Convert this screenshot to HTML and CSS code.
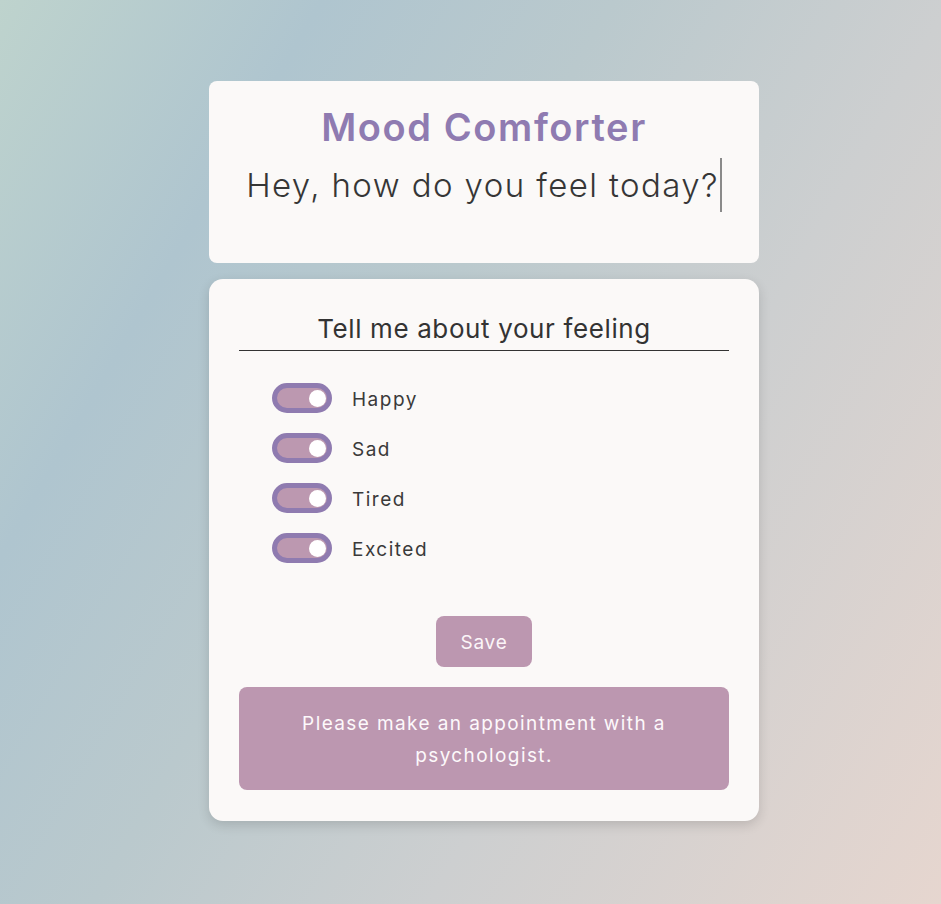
FILE: index.html
```html
<!DOCTYPE html>
<html lang="en">
<head>
<meta charset="utf-8">
<title>Mood Comforter</title>
<link rel="stylesheet" href="styles.css">
</head>
<body>
<main class="app">
  <section class="card card-top">
    <h1 class="title">Mood Comforter</h1>
    <p class="greeting"><span class="typed">Hey, how do you feel today?</span></p>
  </section>
  <section class="card card-form">
    <h2 class="form-title">Tell me about your feeling</h2>
    <ul class="moods">
      <li class="mood"><span class="toggle"><span class="knob"></span></span><span class="mood-label">Happy</span></li>
      <li class="mood"><span class="toggle"><span class="knob"></span></span><span class="mood-label">Sad</span></li>
      <li class="mood"><span class="toggle"><span class="knob"></span></span><span class="mood-label">Tired</span></li>
      <li class="mood"><span class="toggle"><span class="knob"></span></span><span class="mood-label">Excited</span></li>
    </ul>
    <div class="actions"><button class="save" type="button">Save</button></div>
    <div class="message">Please make an appointment with a psychologist.</div>
  </section>
</main>
</body>
</html>
```

FILE: styles.css
```css
* { box-sizing: border-box; }

html, body { margin: 0; }

body {
  min-height: 904px;
  padding-left: 27px;
  font-family: Inter, "Open Sans", sans-serif;
  color: #363636;
  background: linear-gradient(120deg, #bed3cd 0%, #afc5cf 22%, #bac9cd 42%, #cdcfd0 65%, #e6d6cf 100%);
}

.app {
  width: 550px;
  margin: 0 auto;
  padding-top: 81px;
  display: flex;
  flex-direction: column;
  gap: 16px;
}

.card {
  background: #fbf9f8;
}

.card-top {
  border-radius: 8px;
  padding: 22px 30px 51px;
  text-align: center;
}

.title {
  margin: 0;
  font-size: 38px;
  line-height: 48px;
  font-weight: 600;
  letter-spacing: 1.6px;
  color: #8f7bb1;
}

.greeting {
  margin: 7px 0 0;
  font-size: 33px;
  line-height: 54px;
  font-weight: 300;
  letter-spacing: 1.4px;
  color: #363636;
}

.typed {
  display: inline-block;
  border-right: 2px solid #8a8a8a;
  padding-right: 1px;
}

.card-form {
  border-radius: 14px;
  padding: 33px 30px 31px;
  box-shadow: 0 4px 12px rgba(0, 0, 0, 0.14);
}

.form-title {
  margin: 0;
  padding-bottom: 4px;
  border-bottom: 1px solid #333;
  text-align: center;
  font-size: 26px;
  line-height: 34px;
  font-weight: 400;
  letter-spacing: 0.62px;
  color: #333;
}

.moods {
  list-style: none;
  margin: 32px 0 0;
  padding: 0 0 0 33px;
  display: flex;
  flex-direction: column;
  gap: 20px;
}

.mood {
  display: flex;
  align-items: center;
  gap: 20px;
  height: 30px;
}

.toggle {
  width: 60px;
  height: 30px;
  border: 5px solid #8f7bb0;
  border-radius: 15px;
  background: #bc98b0;
  display: flex;
  align-items: center;
  justify-content: flex-end;
  padding-right: 1px;
}

.knob {
  width: 17px;
  height: 17px;
  border-radius: 50%;
  background: #fff;
}

.mood-label {
  padding-top: 2px;
  font-size: 19px;
  letter-spacing: 1.5px;
  color: #3a3a3a;
}

.actions {
  margin-top: 53px;
  display: flex;
  justify-content: center;
}

.save {
  width: 96px;
  height: 51px;
  padding-top: 2px;
  border: none;
  border-radius: 8px;
  background: #bc97b0;
  color: #fbf5f8;
  font-family: inherit;
  font-size: 19px;
  letter-spacing: 0.8px;
}

.message {
  margin-top: 20px;
  padding: 21px 30px 18px;
  border-radius: 8px;
  background: #bc97b0;
  color: #fdf9fb;
  text-align: center;
  font-size: 19px;
  line-height: 32px;
  letter-spacing: 1.4px;
}
```
